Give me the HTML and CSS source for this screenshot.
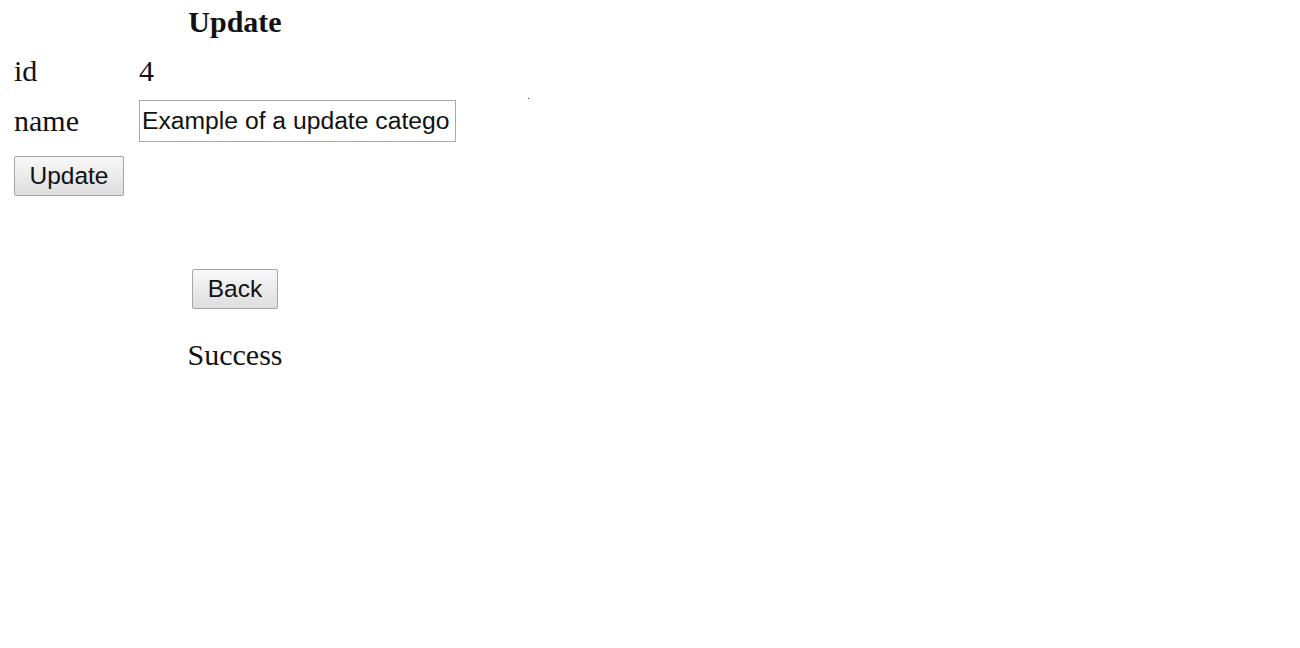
FILE: index.html
```html
<!DOCTYPE html>
<html>
<head>
<meta charset="utf-8">
<title>Update</title>
<link rel="stylesheet" href="styles.css">
</head>
<body>
<div class="page">
  <h1 class="heading">Update</h1>
  <div class="row row-id">
    <span class="label">id</span>
    <span class="value">4</span>
  </div>
  <div class="row row-name">
    <span class="label">name</span>
    <input class="field" type="text" value="Example of a update category">
  </div>
  <div class="row-submit">
    <button class="btn btn-update" type="button">Update</button>
  </div>
  <div class="center back-wrap">
    <button class="btn btn-back" type="button">Back</button>
  </div>
  <div class="center status">Success</div>
</div>
<span class="dot"></span>
</body>
</html>
```

FILE: styles.css
```css
html, body {
  margin: 0;
  padding: 0;
  background: #ffffff;
}

body {
  font-family: "Liberation Serif", "Times New Roman", serif;
  font-size: 30px;
  color: #000000;
  position: relative;
  width: 1300px;
  height: 648px;
  overflow: hidden;
}

.page {
  width: 442px;
  padding-left: 14px;
  padding-top: 4px;
}

.heading {
  margin: 0;
  font-size: 30px;
  font-weight: bold;
  line-height: 36px;
  text-align: center;
  color: #111;
}

.row {
  display: flex;
  align-items: center;
}

.row-id {
  margin-top: 13px;
  height: 36px;
  line-height: 36px;
}

.row-name {
  margin-top: 11px;
  height: 42px;
  line-height: 36px;
}

.label {
  width: 125px;
  flex: none;
  color: #111;
}

.value {
  color: #111;
}

.field {
  box-sizing: border-box;
  width: 317px;
  height: 42px;
  margin: 0;
  padding: 0 5px 0 2px;
  border: 1px solid #a9a9a9;
  border-radius: 0;
  font-family: "Liberation Sans", Arial, sans-serif;
  font-size: 24.7px;
  color: #111;
  background: #ffffff;
  outline: none;
}

.row-submit {
  margin-top: 14px;
  height: 40px;
  display: flex;
}

.btn {
  box-sizing: border-box;
  height: 40px;
  margin: 0;
  padding: 0;
  border: 1px solid #a6a6a6;
  border-radius: 2px;
  background: linear-gradient(#f8f8f8, #dddddd);
  font-family: "Liberation Sans", Arial, sans-serif;
  font-size: 24.5px;
  color: #111;
  line-height: 36px;
}

.btn-update {
  width: 110px;
}

.btn-back {
  width: 86px;
}

.center {
  display: flex;
  justify-content: center;
}

.back-wrap {
  margin-top: 73px;
  height: 40px;
}

.status {
  margin-top: 28px;
  line-height: 36px;
  height: 36px;
  color: #111;
}

.dot {
  position: absolute;
  left: 528px;
  top: 98px;
  width: 1px;
  height: 1px;
  background: #333;
}
```
